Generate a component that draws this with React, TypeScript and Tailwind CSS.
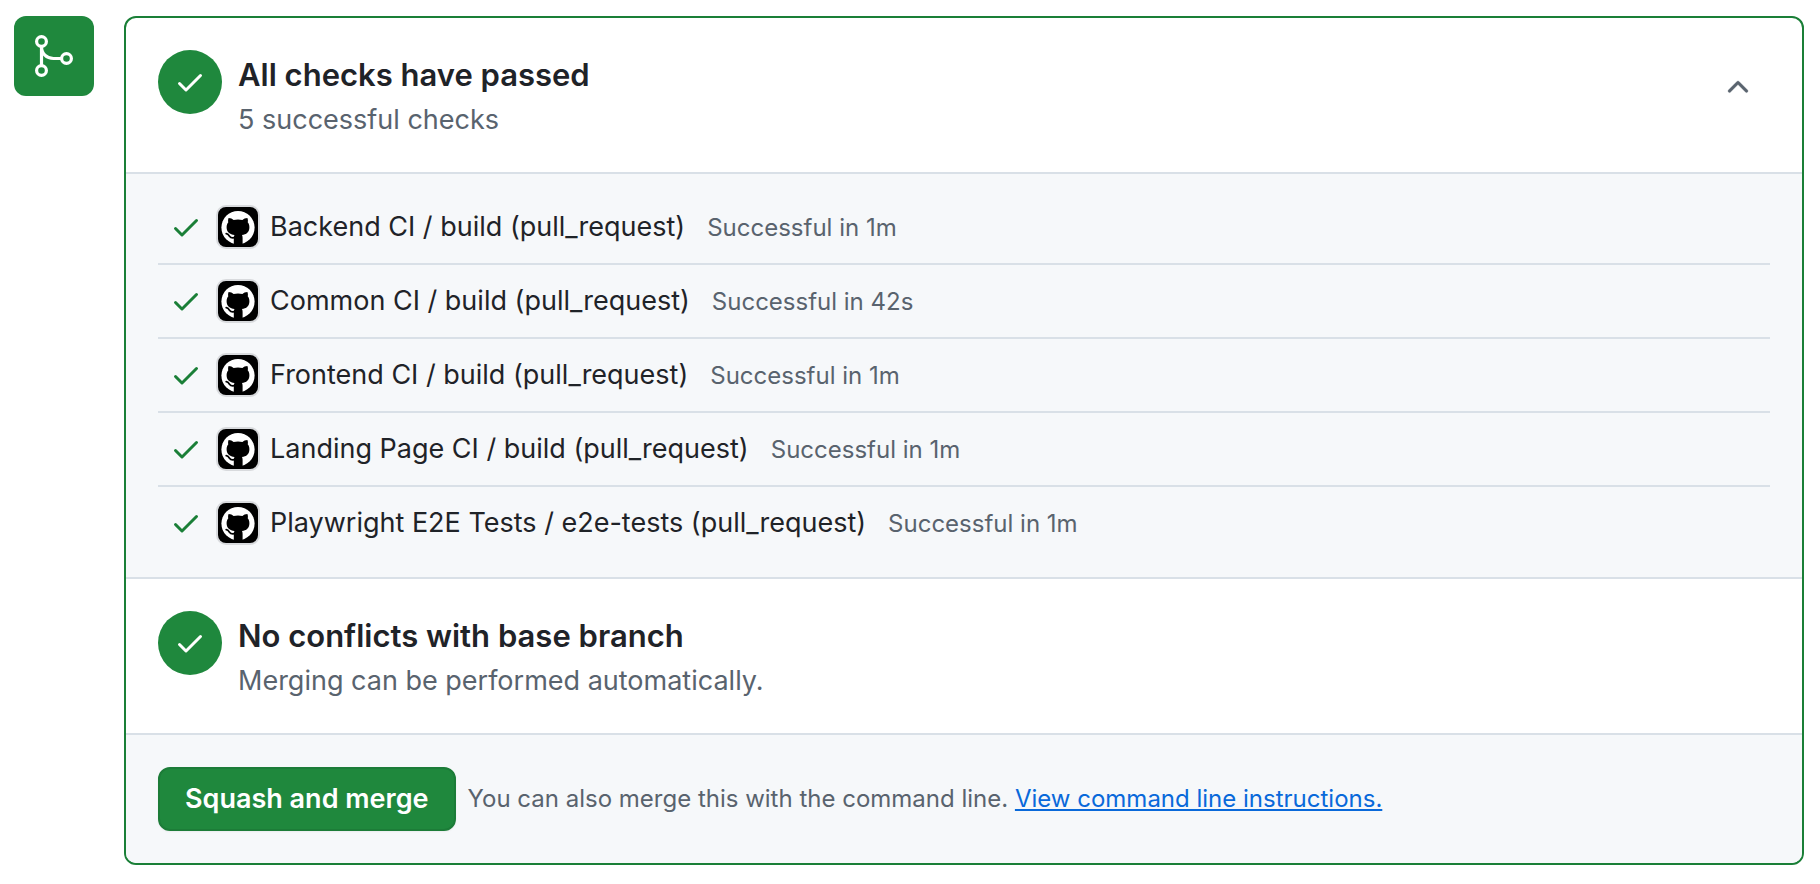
import { useState } from "react";

type IconProps = { className?: string };

function CheckIcon({ className }: IconProps) {
  return (
    <svg viewBox="0 0 16 16" fill="currentColor" aria-hidden="true" className={className}>
      <path d="M13.78 4.22a.75.75 0 0 1 0 1.06l-7.25 7.25a.75.75 0 0 1-1.06 0L2.22 9.28a.751.751 0 0 1 .018-1.042.751.751 0 0 1 1.042-.018L6 10.94l6.72-6.72a.75.75 0 0 1 1.06 0Z" />
    </svg>
  );
}

function ChevronUpIcon({ className }: IconProps) {
  return (
    <svg viewBox="0 0 16 16" fill="currentColor" stroke="currentColor" strokeWidth="0.15" aria-hidden="true" className={className}>
      <path d="M3.22 10.53a.749.749 0 0 1 0-1.06l4.25-4.25a.749.749 0 0 1 1.06 0l4.25 4.25a.749.749 0 1 1-1.06 1.06L8 6.811 4.28 10.53a.749.749 0 0 1-1.06 0Z" />
    </svg>
  );
}

function MergeIcon({ className }: IconProps) {
  return (
    <svg viewBox="0 0 24 24" fill="none" stroke="currentColor" strokeWidth="1.6" aria-hidden="true" className={className}>
      <circle cx="5.75" cy="4.75" r="2.45" />
      <circle cx="5.75" cy="19.25" r="2.45" />
      <circle cx="18.25" cy="13.25" r="2.45" />
      <path d="M5.75 7.25v9.5M5.75 7.25c0 3.6 2.5 6 6 6h4" />
    </svg>
  );
}

function GitHubMark({ className }: IconProps) {
  return (
    <svg viewBox="0 0 40 40" aria-hidden="true" className={className}>
      <circle cx="20" cy="20.6" r="16.6" fill="#fff" />
      <path
        fill="#000"
        d="M10.6 11c1.900 0 3.800 1 5 1.900 2.800-.7 6-.7 8.800 0 1.200-.9 3.100-1.900 5-1.900.7 1.700.6 3.300.3 4.300 1.200 1.400 1.700 3 1.700 5 0 5-3 7.200-7.500 7.800.5.600.7 1.700.7 3V39H15.800v-7.900c0-1.500.3-2.400.8-3C11.800 27.400 8.600 25.400 8.600 20.300c0-2 .6-3.600 1.700-5-.3-1-.4-2.600.3-4.300Z"
      />
      <path
        fill="none"
        stroke="#000"
        strokeWidth="1.700"
        strokeLinecap="round"
        d="M8.200 26.700c1.700.2 2.500 1.300 3.300 2.500 1 1.600 2.600 1.900 4.800 1.500"
      />
    </svg>
  );
}

const checks = [
  { name: "Backend CI / build (pull_request)", status: "Successful in 1m" },
  { name: "Common CI / build (pull_request)", status: "Successful in 42s" },
  { name: "Frontend CI / build (pull_request)", status: "Successful in 1m" },
  { name: "Landing Page CI / build (pull_request)", status: "Successful in 1m" },
  { name: "Playwright E2E Tests / e2e-tests (pull_request)", status: "Successful in 1m" },
];

function Summary({ title, detail }: { title: string; detail: string }) {
  return (
    <>
      <span className="flex size-16 shrink-0 items-center justify-center rounded-full bg-[#1f883d] text-white">
        <CheckIcon className="size-8" />
      </span>
      <div className="min-w-0 flex-1 pt-0.5">
        <h3 className="text-[31px] leading-[46px] font-semibold">{title}</h3>
        <p className="text-[27px] leading-[44px] text-[#59636e]">{detail}</p>
      </div>
    </>
  );
}

export default function App() {
  const [open, setOpen] = useState(true);

  return (
    <main className="flex items-start gap-[30px] bg-white py-4 pr-4 pl-3.5 font-['Inter','Liberation_Sans',sans-serif] text-[#1f2328]">
      <div className="flex size-20 shrink-0 items-center justify-center rounded-xl bg-[#1f883d] text-white">
        <MergeIcon className="size-12" />
      </div>

      <div className="min-w-0 flex-1 overflow-hidden rounded-xl border-2 border-[#1a7f37]">
        <section className="flex items-start gap-4 px-8 pt-8 pb-[30px]">
          <Summary title="All checks have passed" detail="5 successful checks" />
          <button
            type="button"
            aria-label="Toggle checks"
            aria-expanded={open}
            onClick={() => setOpen(!open)}
            className="mt-[5px] flex size-16 items-center justify-center text-[#59636e]"
          >
            <ChevronUpIcon className="size-8" />
          </button>
        </section>

        {open && (
          <ul className="border-t-2 border-[#d9e0e7] bg-[#f6f8fa] px-8 pt-[17px] pb-4">
            {checks.map((check) => (
              <li
                key={check.name}
                className="flex items-center border-b-2 border-[#d9e0e7] py-4 pl-3 last:border-transparent"
              >
                <CheckIcon className="size-8 shrink-0 text-[#1a7f37]" />
                <span className="ml-4 size-10 shrink-0 overflow-hidden rounded-lg bg-black ring-2 ring-[#d8dadd]">
                  <GitHubMark className="size-10" />
                </span>
                <p className="ml-3 flex items-baseline gap-[22px] leading-9">
                  <span className="text-[27px]">{check.name}</span>
                  <span className="text-2xl leading-9 text-[#59636e]">{check.status}</span>
                </p>
              </li>
            ))}
          </ul>
        )}

        <section className="flex items-start gap-4 border-t-2 border-[#d9e0e7] px-8 pt-8 pb-[30px]">
          <Summary title="No conflicts with base branch" detail="Merging can be performed automatically." />
        </section>

        <section className="flex items-center gap-3 border-t-2 border-[#d9e0e7] bg-[#f6f8fa] p-8">
          <button
            type="button"
            className="h-16 rounded-xl border-2 border-[#1c7c38] bg-[#1f883d] px-[25px] text-[27px] font-semibold text-white shadow-xs"
          >
            Squash and merge
          </button>
          <p className="text-2xl leading-9 text-[#59636e]">
            You can also merge this with the command line.{" "}
            <a href="#instructions" className="text-[#0969da] underline decoration-2 underline-offset-2">
              View command line instructions.
            </a>
          </p>
        </section>
      </div>
    </main>
  );
}
